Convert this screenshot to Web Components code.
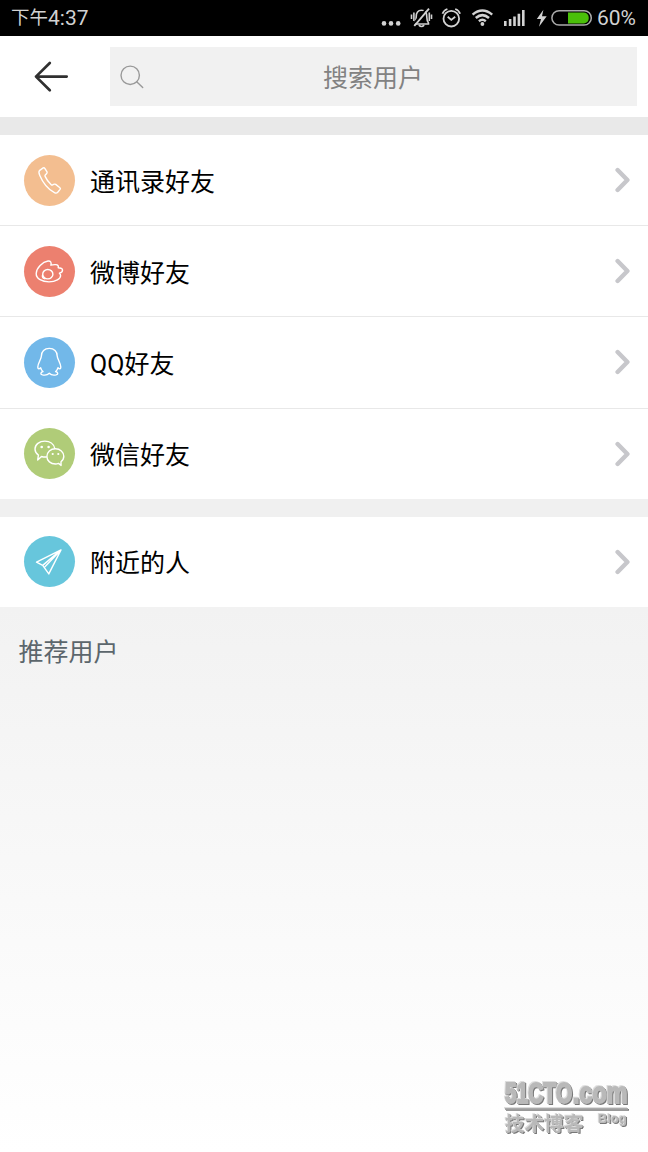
<!DOCTYPE html>
<html lang="zh-CN">
<head>
<meta charset="UTF-8">
<meta name="viewport" content="width=device-width, initial-scale=1">
<title>搜索用户</title>
<style>
    body {
        margin: 0;
        font-family: Roboto, "Noto Sans CJK SC", sans-serif;
    }
</style>
</head>
<body>
<friends-page></friends-page>

<script>
/**
 * Attaches an open shadow root and fills it.
 * @param {HTMLElement} host - The element that gets the shadow root.
 * @param {string} html - Styles and markup of the component.
 */
function attach(host, html) {
    host.attachShadow({ mode: 'open' }).innerHTML = html;
}

/** Line icons of the round badges, drawn on a 51x51 grid. */
const BADGE_ICONS = {
    phone: `
        <path d="M15.4 15.6 L19.2 12.9 Q20.2 12.4 20.8 13.4 L23 16.9 Q23.4 17.8 22.7 18.5 L21.3 19.9 Q20.7 20.6 21.1 21.4 Q23.3 26.2 27.2 29.7 Q27.9 30.3 28.7 29.8 L30.2 29.2 Q31 28.9 31.7 29.4 L35.9 32.7 Q36.8 33.5 36.1 34.4 L33.7 37.3 Q32.4 38.7 30.5 37.7 Q20.9 32.4 15.8 20.4 Q14.3 17 15.4 15.6Z"/>`,
    weibo: `
        <path d="M26.9 19.2 C27.7 16.1 26.4 14.7 24 15 C18.5 15.8 12.4 22.1 12.2 27.5 C12 32.8 18.4 35.9 25 35.9 C31.9 35.9 36.5 32.8 36.6 29.8 C36.7 28.5 36.2 27.9 35.4 27.2 C37.5 26.6 38.8 25.5 38.5 23.9 C38.2 22.3 36.5 21.8 34.2 21.8 C34.8 19.9 33.8 18.7 31.8 18.6 C29.9 18.5 28.6 18.6 26.9 19.2Z"/>
        <ellipse cx="23.8" cy="28.2" rx="5.1" ry="4.7"/>
        <path d="M18.5 29.2 Q17.9 31.9 20.6 32.7"/>`,
    qq: `
        <path d="M25.3 11.4 C20.5 11.4 17.4 14.7 17.4 19 C17.3 22 13.8 26.2 13.8 30.1 C13.9 32.4 15.2 32 16.6 30.7 C17.1 32.5 17.9 33.7 19 34.5 C16.4 35.3 16.1 37.3 18.5 37.9 C21.2 38.4 23.7 38 25.3 36.3 C26.9 38 29.4 38.4 32.1 37.9 C34.5 37.3 34.2 35.3 31.6 34.5 C32.7 33.7 33.5 32.5 34 30.7 C35.4 32 36.7 32.4 36.8 30.1 C36.8 26.2 33.3 22 33.2 19 C33.2 14.7 30.1 11.4 25.3 11.4Z"/>`,
    wechat: `
        <path d="M22.3 29 Q19.8 29.2 17.5 28.5 L13.7 32.1 L14.4 27.1 Q11 24.6 11 21 C11 16.4 15.4 13.1 20.9 13.1 C25.8 13.1 29.8 16 30.7 20.4"/>
        <path d="M31.4 20.7 C26.5 20.7 22.9 24.2 22.9 28.4 C22.9 32.8 26.6 36 31.5 36 Q33 36 34.5 35.4 L37.1 37.4 L37 33.8 Q39.8 31.7 39.8 28.3 C39.8 24.1 36.1 20.7 31.4 20.7Z"/>
        <g fill="#fff" stroke="none">
            <circle cx="17.7" cy="19" r="1.3"/><circle cx="24.6" cy="19" r="1.3"/>
            <circle cx="28.7" cy="26" r="1.1"/><circle cx="34.3" cy="26" r="1.1"/>
        </g>`,
    plane: `
        <path d="M37 13.9 L12.5 26.2 L18.7 29.4 L24.8 37.9Z M18.7 29.4 L37 13.9 L21.2 30.6"/>`
};

/**
 * Phone status bar: clock on the left, system icons on the right.
 */
class StatusBar extends HTMLElement {
    constructor() {
        super();
        attach(this, `
            <style>
                :host {
                    display: flex;
                    align-items: center;
                    height: 36px;
                    padding: 0 11px;
                    background: #000;
                    color: #d2d2d2;
                    font-size: 21px;
                    line-height: 36px;
                }
                .time { flex: 1; display: flex; }
                .period { font-size: 18.5px; padding-top: 1px; line-height: 35px; }
                svg { display: block; flex: none; }
                .level { width: 40px; padding-left: 2px; white-space: nowrap; }
            </style>
            <span class="time"><span class="period"><slot name="period"></slot></span><slot name="time"></slot></span>
            <svg width="28" height="36" fill="#d2d2d2">
                <circle cx="4" cy="23.4" r="2.3"/><circle cx="11" cy="23.4" r="2.3"/><circle cx="18.2" cy="23.4" r="2.3"/>
            </svg>
            <svg width="30" height="36" fill="none" stroke="#d2d2d2" stroke-width="1.6">
                <path d="M6.5 23 Q8.2 21 8.2 17 Q8.2 10.3 13.5 10.3 Q18.8 10.3 18.8 17 Q18.8 21 20.5 23 V24 H6.5Z"/>
                <path d="M5.9 12.5 V21 M3.5 14.5 V19 M21.3 12.5 V21 M23.5 14.5 V19"/>
                <path d="M10.8 25.2 Q13.5 27.8 16.2 25.2"/>
                <path d="M19.4 7.6 L4.8 24.6" stroke="#000" stroke-width="2"/>
                <path d="M21 8.6 L6.3 26" stroke-width="1.9"/>
            </svg>
            <svg width="30" height="36" fill="none" stroke="#d2d2d2" stroke-width="1.8">
                <circle cx="13.3" cy="18.7" r="7.8"/>
                <path d="M9.7 16.8 L13.3 19.9 L17.2 16.8"/>
                <path d="M4.5 13.7 Q5.8 10.2 9.4 9 M22.1 13.7 Q20.8 10.2 17.2 9"/>
            </svg>
            <svg width="30" height="36" fill="none" stroke="#d2d2d2" stroke-width="2.5">
                <path d="M4.6 14.6 Q14.3 6.4 24.2 14.6 M7.8 18 Q14.3 12.2 21 18 M10.9 21.2 Q14.3 18.4 17.8 21.2"/>
                <circle cx="14.4" cy="24" r="1.9" fill="#d2d2d2" stroke="none"/>
            </svg>
            <svg width="32" height="36" fill="#d2d2d2">
                <path d="M6 21h2.6v5h-2.6z M10.8 19h2.6v7h-2.6z M15.2 16.5h2.6v9.5h-2.6z M19.6 13.7h2.6v12.3h-2.6z M24 10h2.6v16h-2.6z"/>
            </svg>
            <svg width="20" height="36" fill="#d2d2d2">
                <path d="M13.4 9.8 L6.8 19 H11 L9 26.8 L16.7 16.2 H12Z"/>
            </svg>
            <svg width="45" height="36">
                <rect x="1.9" y="10.7" width="39.4" height="14.4" rx="7.2" fill="none" stroke="#aaa" stroke-width="1.5"/>
                <path d="M18 12.5 H34 A5.5 5.5 0 0 1 34 23.4 H18Z" fill="#4abf09"/>
            </svg>
            <span class="level"><slot name="level"></slot></span>
        `);
    }
}

/**
 * Header with the back arrow and the search field.
 */
class SearchHeader extends HTMLElement {
    constructor() {
        super();
        attach(this, `
            <style>
                :host {
                    display: flex;
                    box-sizing: border-box;
                    height: 81px;
                    padding: 11px 11px 11px 0;
                    background: #fff;
                }
                .back { width: 110px; height: 59px; }
                .field {
                    flex: 1;
                    display: flex;
                    align-items: center;
                    background: #f1f1f1;
                    color: #828282;
                    font-size: 25px;
                }
                .field svg { flex: none; width: 40px; height: 59px; }
                .hint { flex: 1; padding: 4px 41px 0 0; text-align: center; line-height: 55px; }
            </style>
            <svg class="back" viewBox="0 0 110 59" fill="none" stroke="#303030" stroke-width="2.7" stroke-linecap="round" stroke-linejoin="round">
                <path d="M49.8 16 L36 29.6 L49.8 43.2 M36 29.6 H66.7"/>
            </svg>
            <div class="field">
                <svg viewBox="0 0 40 59" fill="none" stroke="#999" stroke-width="1.4" stroke-linecap="round">
                    <circle cx="20.2" cy="28.3" r="9.2"/>
                    <path d="M26.7 34.8 L32.7 40.6"/>
                </svg>
                <span class="hint"><slot></slot></span>
            </div>
        `);
    }
}

/**
 * List row with a round badge, a label and a chevron.
 * The last row of a group has no divider.
 * Usage: <friend-row icon="qq" color="#72b8e9">Label</friend-row>
 */
class FriendRow extends HTMLElement {
    constructor() {
        super();
        attach(this, `
            <style>
                :host {
                    display: flex;
                    align-items: center;
                    box-sizing: border-box;
                    height: 91.2px;
                    padding: 0 17px 0 24px;
                    border-bottom: 1px solid #e8e8e8;
                    background: #fff;
                    color: #000;
                    font-size: 25px;
                }
                :host([last]) { height: 90px; border-bottom: 0; }
                .badge { width: 51px; height: 51px; border-radius: 50%; background: ${this.getAttribute('color')}; }
                .label { flex: 1; padding: 5px 0 0 15px; line-height: 36px; }
                svg { display: block; fill: none; stroke-linecap: round; stroke-linejoin: round; }
            </style>
            <svg class="badge" viewBox="0 0 51 51" stroke="#fff" stroke-width="1.4">${BADGE_ICONS[this.getAttribute('icon')]}</svg>
            <span class="label"><slot></slot></span>
            <svg width="17" height="26" stroke="#c7c7cb" stroke-width="4.4">
                <path d="M3.6 3 L13.4 13 L3.6 23"/>
            </svg>
        `);
    }
}

/**
 * Embossed site mark in the bottom corner.
 */
class SiteMark extends HTMLElement {
    constructor() {
        super();
        attach(this, `
            <style>
                :host {
                    display: block;
                    position: absolute;
                    right: 11px;
                    bottom: 10px;
                    filter: drop-shadow(-0.7px -0.7px 0 #ddd) drop-shadow(1.2px 1.2px 0 #777);
                }
                svg { display: block; overflow: visible; }
                text { fill: #b9b9b9; font-family: "Liberation Sans", "Noto Sans CJK SC", sans-serif; font-weight: 700; }
            </style>
            <svg width="137" height="76">
                <g font-size="30" stroke="#b9b9b9" stroke-width="1.9">
                    <text transform="translate(5 37) scale(0.7 1)">51CTO</text>
                    <text transform="translate(73 37) scale(0.78 1)">.com</text>
                </g>
                <path d="M5 42.8 H128" stroke="#aaa" stroke-width="1.8"/>
                <text x="5" y="64.5" font-size="19.7">技术博客</text>
                <text x="98" y="57" font-size="13">Blog</text>
            </svg>
        `);
    }
}

/**
 * The whole "add friends" screen.
 */
class FriendsPage extends HTMLElement {
    constructor() {
        super();
        attach(this, `
            <style>
                :host {
                    display: flex;
                    flex-direction: column;
                    position: relative;
                    height: 1152px;
                    background: #fff;
                }
                .gap { height: 18px; background: #f0f0f0; }
                .gap.top { background: #e9e9e9; }
                .recommended {
                    flex: 1;
                    padding: 27px 18.5px;
                    background: linear-gradient(#f2f2f2, #fff);
                    color: #5c666c;
                    font-size: 25px;
                    line-height: 38px;
                }
            </style>
            <status-bar><span slot="period">下午</span><span slot="time">4:37</span><span slot="level">60%</span></status-bar>
            <search-header>搜索用户</search-header>
            <div class="gap top"></div>
            <friend-row icon="phone" color="#f3be90">通讯录好友</friend-row>
            <friend-row icon="weibo" color="#ec806f">微博好友</friend-row>
            <friend-row icon="qq" color="#72b8e9">QQ好友</friend-row>
            <friend-row icon="wechat" color="#b0cc78" last>微信好友</friend-row>
            <div class="gap"></div>
            <friend-row icon="plane" color="#67c6dc" last>附近的人</friend-row>
            <div class="recommended">推荐用户</div>
            <site-mark></site-mark>
        `);
    }
}

customElements.define('status-bar', StatusBar);
customElements.define('search-header', SearchHeader);
customElements.define('friend-row', FriendRow);
customElements.define('site-mark', SiteMark);
customElements.define('friends-page', FriendsPage);
</script>
</body>
</html>
